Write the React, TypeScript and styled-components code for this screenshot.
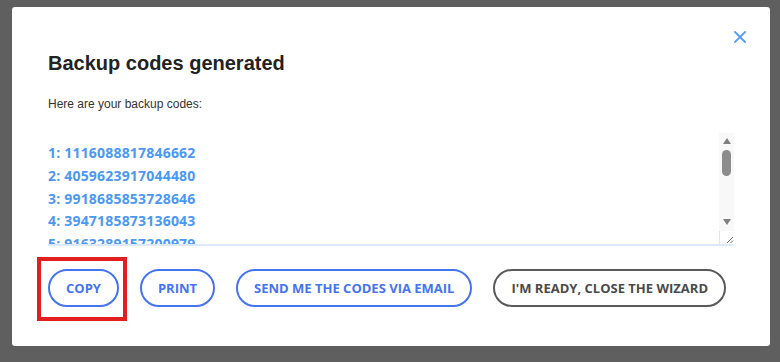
import React from "react";
import styled, { createGlobalStyle } from "styled-components";

const codes = [
  "1116088817846662",
  "4059623917044480",
  "9918685853728646",
  "3947185873136043",
  "9163289157200979",
  "2730518846619024",
  "6685120397451178",
  "5302974418860315",
  "8841067725903346",
  "1579346608212857",
];

const GlobalStyle = createGlobalStyle`
  html, body {
    margin: 0;
    padding: 0;
    background: #5f5f5f;
  }
  body {
    font-family: "Liberation Sans", Arial, sans-serif;
  }
`;

const Page = styled.div`
  width: 780px;
  height: 362px;
  padding: 7px 10px 16px 12px;
  box-sizing: border-box;
`;

const Modal = styled.div`
  background: #fff;
  border-radius: 3px;
  height: 339px;
  box-sizing: border-box;
  padding: 24px 24px 0 36px;
  display: flex;
  flex-direction: column;
`;

const TopBar = styled.div`
  display: flex;
  justify-content: flex-end;
  height: 12px;
`;

const CloseButton = styled.button`
  border: none;
  background: none;
  padding: 0;
  width: 12px;
  height: 12px;
  display: flex;
  cursor: pointer;
`;

const Body = styled.div`
  padding-right: 12px;
  display: flex;
  flex-direction: column;
`;

const Title = styled.h2`
  margin: 8px 0 0;
  font-size: 20px;
  line-height: 24px;
  font-weight: bold;
  color: #222;
`;

const Subtitle = styled.p`
  margin: 21px 0 0;
  font-size: 12px;
  line-height: 16px;
  color: #333;
`;

const CodeBox = styled.div`
  margin-top: 21px;
  height: 113px;
  box-sizing: border-box;
  display: flex;
  border-bottom: 2px solid #dce8fc;
`;

const CodeArea = styled.textarea`
  flex: 1;
  margin: 0;
  padding: 9px 0 0;
  border: none;
  outline: none;
  overflow: hidden;
  resize: none;
  font-family: "Open Sans", sans-serif;
  font-weight: 700;
  font-size: 14px;
  letter-spacing: 0.2px;
  line-height: 22.8px;
  color: #4b98f6;
  background: #fff;
`;

const Rail = styled.div`
  width: 15px;
  display: flex;
  flex-direction: column;
`;

const Track = styled.div`
  flex: 1;
  background: #f8f8f8;
  display: flex;
  flex-direction: column;
  align-items: center;
  padding: 5px 0 6px;
`;

const Thumb = styled.div`
  margin-top: 6px;
  width: 9px;
  height: 26px;
  border-radius: 5px;
  background: #8c8c8c;
`;

const Spacer = styled.div`
  flex: 1;
`;

const Resizer = styled.div`
  height: 13px;
  box-sizing: border-box;
  border-left: 1px solid #e4e4e4;
  background: #fff;
  display: flex;
  justify-content: flex-end;
  align-items: flex-end;
`;

const Actions = styled.div`
  margin-top: 23px;
  display: flex;
  gap: 21px;
`;

const Highlight = styled.div`
  position: relative;
  display: flex;
  &::after {
    content: "";
    position: absolute;
    top: -12px;
    left: -11px;
    right: -8px;
    bottom: -14px;
    border: 4px solid #e21e1e;
    pointer-events: none;
  }
`;

const PillButton = styled.button<{ $tone?: "blue" | "gray" }>`
  height: 38px;
  box-sizing: border-box;
  padding: 0 16px;
  border-radius: 19px;
  background: #fff;
  border: 2px solid ${(p) => (p.$tone === "gray" ? "#5a5a5a" : "#4474f2")};
  color: ${(p) => (p.$tone === "gray" ? "#4a4a4a" : "#4474f2")};
  font-family: "Open Sans", sans-serif;
  font-weight: 700;
  font-size: 13px;
  text-transform: uppercase;
  cursor: pointer;
  white-space: nowrap;
`;

const Arrow = ({ dir }: { dir: "up" | "down" }) => (
  <svg width="8" height="6" viewBox="0 0 8 6">
    <path d={dir === "up" ? "M0 6L4 0L8 6Z" : "M0 0L8 0L4 6Z"} fill="#7f7f7f" />
  </svg>
);

export default function App() {
  const text = codes.map((c, i) => `${i + 1}: ${c}`).join("\n");
  return (
    <>
      <GlobalStyle />
      <Page>
        <Modal>
          <TopBar>
            <CloseButton aria-label="Close">
              <svg width="12" height="12" viewBox="0 0 12 12">
                <path
                  d="M1 1L11 11M11 1L1 11"
                  stroke="#4f9cff"
                  strokeWidth="1.8"
                  strokeLinecap="square"
                />
              </svg>
            </CloseButton>
          </TopBar>
          <Body>
            <Title>Backup codes generated</Title>
            <Subtitle>Here are your backup codes:</Subtitle>
            <CodeBox>
              <CodeArea readOnly value={text} />
              <Rail>
                <Track>
                  <Arrow dir="up" />
                  <Thumb />
                  <Spacer />
                  <Arrow dir="down" />
                </Track>
                <Resizer>
                  <svg width="10" height="10" viewBox="0 0 10 10">
                    <path
                      d="M9 3L3 9M9 6.5L6.5 9"
                      stroke="#6f6f6f"
                      strokeWidth="1"
                    />
                  </svg>
                </Resizer>
              </Rail>
            </CodeBox>
            <Actions>
              <Highlight>
                <PillButton>Copy</PillButton>
              </Highlight>
              <PillButton>Print</PillButton>
              <PillButton>Send me the codes via email</PillButton>
              <PillButton $tone="gray">I'm ready, close the wizard</PillButton>
            </Actions>
          </Body>
        </Modal>
      </Page>
    </>
  );
}
